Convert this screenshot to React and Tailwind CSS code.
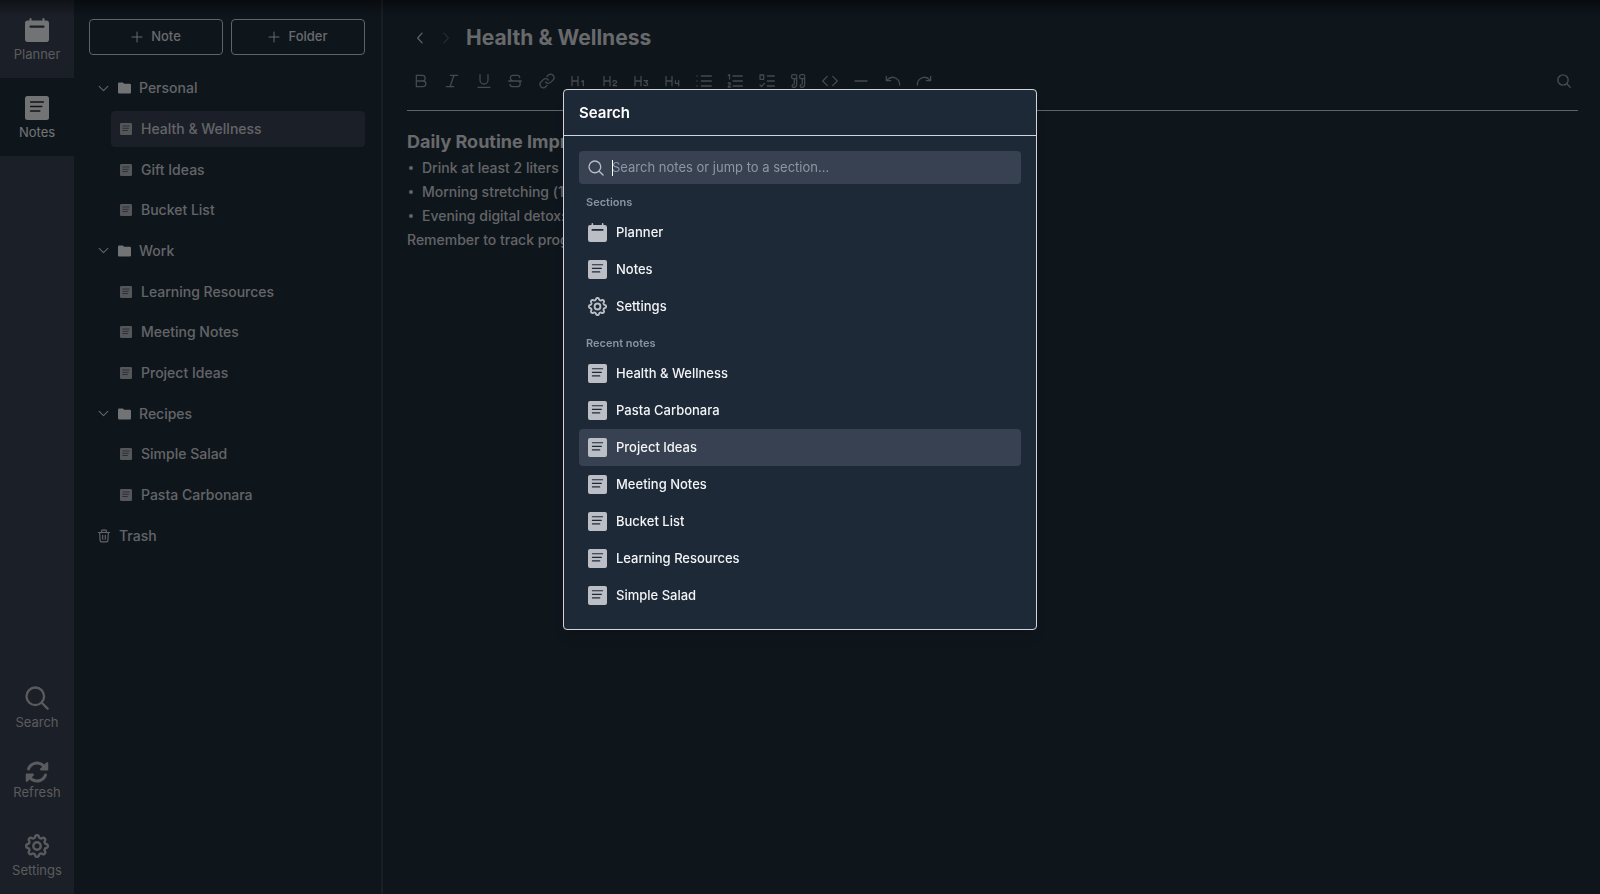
import { FaRotate } from "react-icons/fa6";

/* ---------- icons ---------- */

function Line({ size = 16, width = 1.5, className = "", children }) {
  return (
    <svg
      width={size}
      height={size}
      viewBox="0 0 24 24"
      fill="none"
      stroke="currentColor"
      strokeWidth={width}
      strokeLinecap="round"
      strokeLinejoin="round"
      aria-hidden="true"
      className={`shrink-0 ${className}`}
    >
      {children}
    </svg>
  );
}

function CalendarIcon({ size, hole }) {
  return (
    <svg width={size} height={size} viewBox="0 0 24 24" aria-hidden="true" className="shrink-0">
      <path
        fill="currentColor"
        d="M5.500 0a1 1 0 0 1 1 1v1.600h11V1a1 1 0 1 1 2 0v1.600h1.700A2.800 2.800 0 0 1 24 5.400v15.800A2.800 2.800 0 0 1 21.200 24H2.800A2.800 2.800 0 0 1 0 21.200V5.400A2.800 2.800 0 0 1 2.800 2.600h1.700V1a1 1 0 0 1 1-1Z"
      />
      <path d="M5.500 8.700h13" className={hole} strokeWidth="2.200" strokeLinecap="round" />
    </svg>
  );
}

function NoteIcon({ size, hole }) {
  return (
    <svg width={size} height={size} viewBox="0 0 24 24" aria-hidden="true" className="shrink-0">
      <rect width="24" height="24" rx="2.500" fill="currentColor" />
      <path d="M5.600 6h12.800M5.600 10.600h11.200M5.600 15h9.200" className={hole} strokeWidth="1.500" strokeLinecap="round" />
    </svg>
  );
}

/* Outline of a cog with eight soft lobes. */
const cogPath = (() => {
  const points = [];
  for (let i = 0; i < 160; i += 1) {
    const angle = (i / 160) * Math.PI * 2;
    const wave = Math.tanh(1.5 * Math.cos(angle * 8)) / Math.tanh(1.5);
    const radius = 9.6 + 1.2 * wave;
    points.push(`${(12 + radius * Math.sin(angle)).toFixed(2)} ${(12 - radius * Math.cos(angle)).toFixed(2)}`);
  }
  return `M${points.join("L")}Z`;
})();

function CogIcon({ size }) {
  return (
    <Line size={size} width={2.4}>
      <path d={cogPath} />
      <circle cx="12" cy="12" r="3.700" />
    </Line>
  );
}

function SearchIcon({ size, width = 2 }) {
  return (
    <Line size={size} width={width}>
      <circle cx="10.300" cy="10.300" r="8.800" />
      <path d="m16.800 16.800 5.800 5.800" />
    </Line>
  );
}

function FolderIcon() {
  return (
    <svg width="13" height="12" viewBox="0 0 13 12" aria-hidden="true" className="shrink-0">
      <path fill="currentColor" d="M1.200.5h3.600l1.400 1.300h5.600A1.200 1.200 0 0 1 13 3v7.300a1.200 1.200 0 0 1-1.200 1.200H1.200A1.200 1.200 0 0 1 0 10.300V1.700A1.200 1.200 0 0 1 1.200.5Z" />
    </svg>
  );
}

function TrashIcon() {
  return (
    <Line size={14} width={2}>
      <path d="M2.500 6h19M8 6V3.500A1.500 1.500 0 0 1 9.500 2h5A1.500 1.500 0 0 1 16 3.500V6M4.500 6l.9 14A2 2 0 0 0 7.400 22h9.200a2 2 0 0 0 2-2l.9-14M9.800 11v6.500M14.200 11v6.500" />
    </Line>
  );
}

const heading = "M3 5v14M12 5v14M3 12h9";

const tools = [
  { name: "Bold", d: "M5 3.500h9a4.250 4.250 0 0 1 0 8.500H5ZM5 12h10a4.250 4.250 0 0 1 0 8.500H5Z" },
  { name: "Italic", d: "M9.500 3.500h11M3.500 20.500h11M15 3.500l-6 17" },
  { name: "Underline", d: "M6 2.500v8a6 6 0 0 0 12 0v-8M3 21.500h18" },
  { name: "Strikethrough", d: "M19 7V6.500a3 3 0 0 0-3-3H9a4 4 0 0 0-4 4.200C5 10 6.500 11 9 12M2.500 12h19M16.500 12a4.300 4.300 0 0 1-.8 8.500H8a3.500 3.500 0 0 1-3.500-3.500" },
  { name: "Link", d: "M10 13.500a5 5 0 0 0 7.500.5l3.500-3.500a5 5 0 0 0-7.100-7.100l-2 2M14 10.500a5 5 0 0 0-7.500-.5L3 13.500a5 5 0 0 0 7.100 7.100l2-2" },
  { name: "Heading 1", d: `${heading}M17.500 13l2.500-1.500V19` },
  { name: "Heading 2", d: `${heading}M16.500 13.500c0-3 5.500-2.800 5.500 0 0 2-5.500 3.500-5.500 5.500H22` },
  { name: "Heading 3", d: `${heading}M16.500 11.500H22l-3 3c4 0 4 4.500 0 4.500-1.500 0-2.300-.6-2.700-1.500` },
  { name: "Heading 4", d: `${heading}M17 11.500v4h5M22 11.500V19` },
  { name: "Bullet list", d: "M8 4.500h15M8 12h15M8 19.500h15M1.500 4.500h.1M1.500 12h.1M1.500 19.500h.1" },
  { name: "Numbered list", d: "M9 4.500h14M9 12h14M9 19.500h14M2 3.500 3.800 2.500V9M1.800 15.500c.8-1.500 3.500-1 3.300.8-.2 1.500-3.300 2.700-3.300 4.700H5.500" },
  { name: "Task list", d: "M12.500 4.500H23M12.500 12H23M12.500 19.500H23M1.500 3h5.500v6.500H1.500ZM1.500 18l2.200 2.500L8 15.500" },
  { name: "Quote", d: "M10 8.500H4.500a2 2 0 0 1-2-2v-2a2 2 0 0 1 2-2H8a2 2 0 0 1 2 2V16c0 3.500-1.500 5.500-4.500 5.500-3 0-3-3.500-.5-4 1.200-.3 1.500-1 1.500-2.500V9M22 8.500h-5.500a2 2 0 0 1-2-2v-2a2 2 0 0 1 2-2H20a2 2 0 0 1 2 2V16c0 3.500-1.500 5.500-4.500 5.500-3 0-3-3.500-.5-4 1.200-.3 1.500-1 1.500-2.500V9" },
  { name: "Code", d: "m8 5-7 7 7 7M16 5l7 7-7 7" },
  { name: "Divider", d: "M3 12h18" },
  { name: "Undo", d: "M2 5v6.500h6.500M2.500 11C7 6 13 5.500 17.500 8.500c3 2 4.500 5 4.500 9.500" },
  { name: "Redo", d: "M22 5v6.500h-6.500M21.500 11C17 6 11 5.500 6.500 8.500 3.500 10.500 2 13.500 2 18" },
];

/* ---------- data ---------- */

const tree = [
  { kind: "folder", label: "Personal" },
  { kind: "note", label: "Health & Wellness", active: true },
  { kind: "note", label: "Gift Ideas" },
  { kind: "note", label: "Bucket List" },
  { kind: "folder", label: "Work" },
  { kind: "note", label: "Learning Resources" },
  { kind: "note", label: "Meeting Notes" },
  { kind: "note", label: "Project Ideas" },
  { kind: "folder", label: "Recipes" },
  { kind: "note", label: "Simple Salad" },
  { kind: "note", label: "Pasta Carbonara" },
  { kind: "trash", label: "Trash" },
];

const recent = [
  "Health & Wellness",
  "Pasta Carbonara",
  "Project Ideas",
  "Meeting Notes",
  "Bucket List",
  "Learning Resources",
  "Simple Salad",
];

/* ---------- rail ---------- */

function RailButton({ label, className, children }) {
  return (
    <button type="button" className={`flex w-full flex-col items-center text-[13px] leading-4 ${className}`}>
      {children}
      <span>{label}</span>
    </button>
  );
}

function Rail() {
  return (
    <nav className="flex w-[74px] shrink-0 flex-col bg-[#373e4e] text-[#b4b7bd]">
      <RailButton label="Planner" className="h-[78px] gap-1 pt-[18px]">
        <span className="text-[#e5e7eb]">
          <CalendarIcon size={24} hole="stroke-[#373e4e]" />
        </span>
      </RailButton>
      <RailButton label="Notes" className="h-[78px] gap-1 bg-[#1d2a37] pt-[18px] text-[#e5e7eb]">
        <NoteIcon size={24} hole="stroke-[#1d2a37]" />
      </RailButton>
      <div className="flex-1" />
      <RailButton label="Search" className="h-[74px] gap-1">
        <SearchIcon size={24} width={2.3} />
      </RailButton>
      <RailButton label="Refresh" className="h-[74px]">
        <FaRotate size={24} className="shrink-0" />
      </RailButton>
      <RailButton label="Settings" className="h-[60px] gap-1">
        <CogIcon size={24} />
      </RailButton>
    </nav>
  );
}

/* ---------- sidebar ---------- */

function AddButton({ label }) {
  return (
    <button
      type="button"
      className="flex h-9 flex-1 items-center justify-center gap-2 rounded border border-[#c3c7cd] text-[13px] font-medium text-[#d1d3d7]"
    >
      <Line size={12} width={2}>
        <path d="M12 2v20M2 12h20" />
      </Line>
      {label}
    </button>
  );
}

function TreeRow({ kind, label, active }) {
  const indent = kind === "note" ? "ml-[22px] gap-[9px] pl-[9px]" : "gap-2 pl-2";
  return (
    <li className="flex">
      <button
        type="button"
        className={`flex flex-1 items-center rounded text-[14px] leading-5 font-medium ${indent} ${active ? "bg-[#373e4e]" : ""}`}
      >
        {kind === "folder" && (
          <>
            <Line size={13} width={2}>
              <path d="m4 8 8 8 8-8" />
            </Line>
            <span className="text-[#e5e7eb]">
              <FolderIcon />
            </span>
          </>
        )}
        {kind === "note" && (
          <span className="text-[#a9adb4]">
            <NoteIcon size={12} hole="stroke-[#3a424e]" />
          </span>
        )}
        {kind === "trash" && <TrashIcon />}
        {label}
      </button>
    </li>
  );
}

function Sidebar() {
  return (
    <aside className="flex w-[309px] shrink-0 flex-col border-r-2 border-[#373f4a] pt-[19px] pr-4 pl-[15px] text-[#c6c9ce]">
      <div className="flex gap-2">
        <AddButton label="Note" />
        <AddButton label="Folder" />
      </div>
      <ul className="mt-[15px] grid h-[484px] grid-rows-12 gap-1">
        {tree.map((row) => (
          <TreeRow key={row.label} {...row} />
        ))}
      </ul>
    </aside>
  );
}

/* ---------- editor ---------- */

function Editor() {
  return (
    <main className="min-w-0 flex-1 pr-[22px] pl-6 text-[#c6c9ce]">
      <header className="flex h-[73px] items-center pt-[3px] pl-[6px]">
        <button type="button" aria-label="Back">
          <Line size={14} width={2}>
            <path d="m15.500 3.500-7.500 8.500 7.500 8.500" />
          </Line>
        </button>
        <button type="button" aria-label="Forward" className="ml-3 text-[#4b5563]">
          <Line size={14} width={2}>
            <path d="m8.500 3.500 7.500 8.500-7.500 8.500" />
          </Line>
        </button>
        <h1 className="ml-[13px] text-[21px] leading-8 font-bold text-[#d1d3d7]">Health &amp; Wellness</h1>
      </header>
      <div className="flex h-[38px] items-start justify-between border-b border-[#c3c7cd] text-[#8d929b]">
        <div className="-ml-0.5 grid w-[535px] grid-cols-17">
          {tools.map((tool) => (
            <button key={tool.name} type="button" aria-label={tool.name} className="flex justify-center">
              <Line size={16} width={1.9}>
                <path d={tool.d} />
              </Line>
            </button>
          ))}
        </div>
        <button type="button" aria-label="Find in note" className="mt-px mr-[7px]">
          <SearchIcon size={14} width={2.500} />
        </button>
      </div>
      <article className="pt-[19px] text-[14px] leading-6 font-medium">
        <h2 className="text-[18px] leading-6 font-bold text-[#d1d3d7]">Daily Routine Improvements</h2>
        <ul className="pt-0.5">
          {["Drink at least 2 liters of", "Morning stretching (10m)", "Evening digital detox:"].map((item) => (
            <li key={item} className="flex items-center gap-[7px]">
              <span className="mx-0.5 size-1 rounded-full bg-[#c6c9ce]" />
              {item}
            </li>
          ))}
        </ul>
        <p>Remember to track progress</p>
      </article>
    </main>
  );
}

/* ---------- search dialog ---------- */

function ResultRow({ label, icon, active }) {
  return (
    <li>
      <button
        type="button"
        className={`flex h-[37px] w-full items-center gap-[9px] rounded-sm pl-[9px] text-[13px] font-medium text-[#f3f4f6] ${active ? "bg-[#374151]" : ""}`}
      >
        <span className="text-[#bbbec5]">{icon}</span>
        {label}
      </button>
    </li>
  );
}

function GroupTitle({ children }) {
  return <h3 className="px-[7px] pt-2.5 pb-1 text-[11px] leading-4 font-semibold text-[#8b939f]">{children}</h3>;
}

function SearchDialog() {
  return (
    <div className="fixed inset-0 flex items-start justify-center bg-black/50 pt-[89px]">
      <section
        role="dialog"
        aria-label="Search"
        className="w-[474px] rounded border border-[#d1d5db] bg-[#1e2937] shadow-lg"
      >
        <h2 className="flex h-[46px] items-center border-b border-[#d1d5db] px-[15px] pt-0.5 text-[15px] font-semibold text-white">
          Search
        </h2>
        <div className="p-[15px]">
          <label className="relative flex h-[33px] items-center rounded-sm bg-[#374151] pl-[9px] text-[#b9bdc7]">
            <SearchIcon size={16} />
            <span className="absolute left-[33px] h-4 w-px bg-white" />
            <input
              type="text"
              aria-label="Search notes"
              placeholder="Search notes or jump to a section..."
              className="ml-2 min-w-0 flex-1 bg-transparent text-[13px] text-white outline-none placeholder:text-[#8f96a3]"
            />
          </label>
          <GroupTitle>Sections</GroupTitle>
          <ul>
            <ResultRow label="Planner" icon={<CalendarIcon size={19} hole="stroke-[#1e2937]" />} />
            <ResultRow label="Notes" icon={<NoteIcon size={19} hole="stroke-[#1e2937]" />} />
            <ResultRow label="Settings" icon={<CogIcon size={19} />} />
          </ul>
          <GroupTitle>Recent notes</GroupTitle>
          <ul>
            {recent.map((label) => (
              <ResultRow
                key={label}
                label={label}
                active={label === "Project Ideas"}
                icon={<NoteIcon size={19} hole="stroke-[#1e2937]" />}
              />
            ))}
          </ul>
        </div>
      </section>
      <div className="pointer-events-none absolute inset-x-0 top-0 h-4 bg-linear-to-b from-black/40 to-transparent" />
    </div>
  );
}

export default function App() {
  return (
    <div className="flex h-screen overflow-hidden bg-[#1d2a37] font-[Inter,sans-serif]">
      <Rail />
      <Sidebar />
      <Editor />
      <SearchDialog />
    </div>
  );
}
